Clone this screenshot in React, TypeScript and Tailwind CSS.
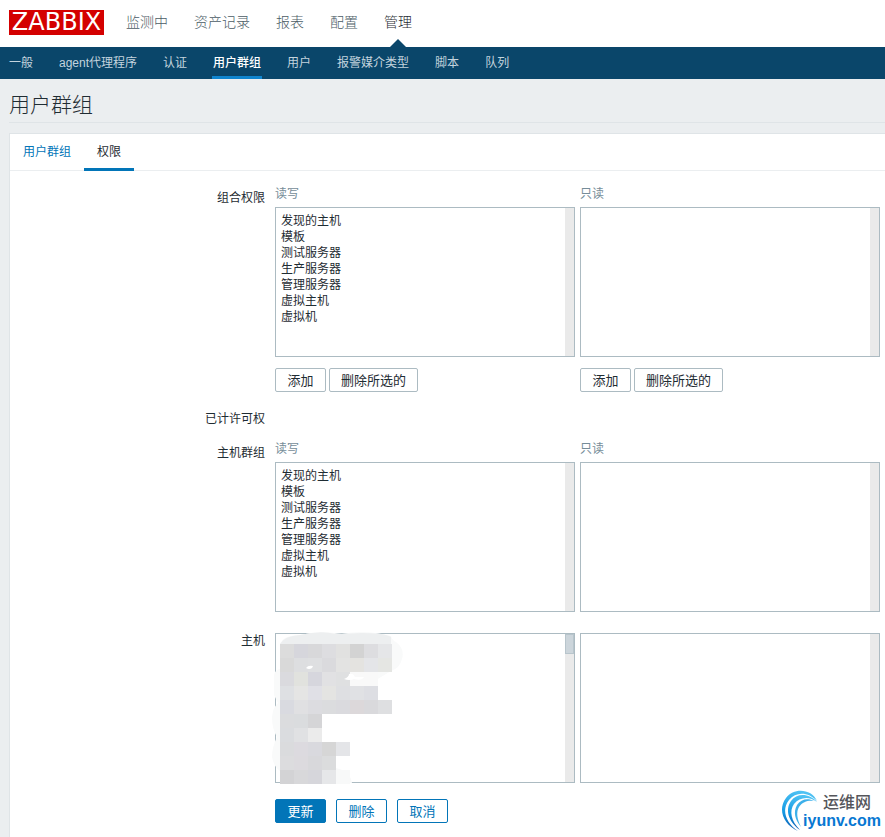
import { useState } from "react";
import clsx from "clsx";

const MAIN_MENU = ["监测中", "资产记录", "报表", "配置", "管理"];
const SUB_MENU = ["一般", "agent代理程序", "认证", "用户群组", "用户", "报警媒介类型", "脚本", "队列"];
const HOST_GROUPS = ["发现的主机", "模板", "测试服务器", "生产服务器", "管理服务器", "虚拟主机", "虚拟机"];

// Masked host names, 14px cells, one array per row
const MASK_ROWS = [
  ["#dcdcdc", "#d6d6dc", "#d8d8da", "#dddde0", "#e1e1e0", "#d3d3d3", "#dddde0", "#e5e6e8"],
  ["#d9d9d9", "#dddee0", "#dedfe1", "#dadadd", "#e3e3e2", "#e4e3e0", "#e4e5e8", "#e5e6e3"],
  ["#dadade", "#e1e2de", "#d6d6dd", "#e1e1e3", "#dfe0e1", "#f9f9f9", "#f9f9f9"],
  ["#dee0e3", "#e5e5e4", "#e0e0e6", "#e4e4e2", "#dedfe2", "#e0e1e4", "#dddee3"],
  ["#d9dae0", "#e0e0e2", "#dcdce0", "#dbdcde", "#dadade", "#dcd8da", "#d9d9dc", "#dedfe1"],
  ["#dbdcde", "#dadcde", "#d5d5d7"],
  ["#dadcdf", "#e0e1e3", "#ebebeb"],
  ["#dadbdd", "#dcdadf", "#d9d9de", "#d6d6d6", "#e4e5e8"],
  ["#dcdcde", "#dcdade", "#d8d8db", "#dbdcdd"],
  ["#d3d3d5", "#d8d8da", "#d6d6db", "#e6e7e9", "#f8f9f9"],
];

interface ListBoxProps {
  label: string;
  options?: string[];
  thumb?: boolean;
}

function ListBox({ label, options = [], thumb }: ListBoxProps) {
  return (
    <div className="flex h-[150px] w-[300px] border border-[#acbbc2] bg-white">
      <select
        multiple
        aria-label={label}
        className="min-w-0 flex-1 appearance-none overflow-hidden px-[5px] py-[3px] text-xs text-[#1f2c33] outline-none"
      >
        {options.map((o) => (
          <option key={o} className="h-4 p-0 leading-4">
            {o}
          </option>
        ))}
      </select>
      <div className="w-[9px] bg-[#eaeaea]">
        {thumb && <div className="h-5 border border-[#b8c5cc] bg-[#ccd5db]" />}
      </div>
    </div>
  );
}

function FormRow({ label, heading, children }: { label: string; heading?: boolean; children?: React.ReactNode }) {
  return (
    <div className="flex gap-[10px]">
      <div className={clsx("w-[255px] shrink-0 text-right text-xs leading-4", heading && "pt-1")}>{label}</div>
      <div className="flex gap-[5px]">{children}</div>
    </div>
  );
}

function PermissionColumn({ title, label, options, actions }: { title: string; label: string; options?: string[]; actions?: boolean }) {
  return (
    <div>
      <div className="mb-[5px] text-xs leading-4 text-[#768d99]">{title}</div>
      <ListBox label={`${label} ${title}`} options={options} />
      {actions && (
        <div className="mt-[11px] flex gap-[3px]">
          <Button>添加</Button>
          <Button>删除所选的</Button>
        </div>
      )}
    </div>
  );
}

function Button({ children, variant = "grey" }: { children: React.ReactNode; variant?: "grey" | "primary" | "alt" }) {
  return (
    <button
      type="button"
      className={clsx(
        "h-6 min-w-[51px] rounded-[2px] border px-[11px] pt-px text-[13px] leading-5",
        variant === "grey" && "border-[#acbbc2] bg-white text-[#1f2c33]",
        variant === "primary" && "border-[#0275b8] bg-[#0275b8] text-white",
        variant === "alt" && "border-[#0275b8] bg-white text-[#0275b8]",
      )}
    >
      {children}
    </button>
  );
}

function MaskedHosts() {
  return (
    <svg className="pointer-events-none absolute -left-[3px] -top-[2px]" width="131" height="154" viewBox="0 0 131 154">
      <path d="M8 14Q10 4 28 4Q48 -1 70 3Q92 -2 119 5Q120 9 124 11Q133 18 130 28Q128 37 119 40L104 49H30V150H8V140Q2 136 0 126Q0 116 5 106Q0 98 0 86Q1 76 6 72L2 64V44Q3 39 8 38Z" fill="#f9fafa" />
      <path d="M8 13Q12 5 28 4Q48 -1 64 3L90 2Q112 2 119 6V13Z" fill="#edeff0" />
      <path d="M64 137Q78 140 80 152H64Z" fill="#f8f9f9" />
      {MASK_ROWS.map((row, y) =>
        row.map((fill, x) => <rect key={`${x}-${y}`} x={8 + x * 14} y={13 + y * 14} width="14" height="14" fill={fill} />),
      )}
      <path d="M34 37Q36 34 41 35L40 37Q37 39 34 37Z" fill="#fff" />
      <path d="M72 48Q77 46 77 43Q81 42 83 46L92 46Q90 50 82 48Q77 50 72 48Z" fill="#fff" />
    </svg>
  );
}

function Watermark() {
  return (
    <div className="pointer-events-none absolute bottom-[5px] right-1 flex">
      <svg width="38" height="43" viewBox="0 0 38 43" aria-hidden="true">
        <defs>
          <linearGradient id="swirl" x1="0.6" y1="0" x2="0.4" y2="1">
            <stop offset="0" stopColor="#52c4f4" />
            <stop offset="0.6" stopColor="#159be4" />
            <stop offset="1" stopColor="#0b5fb5" />
          </linearGradient>
        </defs>
        <path d="M36 12C31 0 13 -2 5 9C-4 21 3 36 17 42C5 34 0 21 8 11C15 2 28 3 36 12Z" fill="url(#swirl)" />
        <path d="M36 13C28 4 16 4 10 12C3 22 9 34 19 41C10 32 8 22 13 15C19 8 28 7 36 13Z" fill="url(#swirl)" />
        <path d="M33 12C27 9 20 10 16 16C12 23 14 31 20 38C16 30 15 23 18 18C22 12 28 11 33 12Z" fill="#3db0ea" />
      </svg>
      <div className="-ml-4 flex flex-col items-end pt-[5px]">
        <span className="mr-[10px] text-base font-medium leading-[18px] text-[#55565b]">运维网</span>
        <span className="text-base font-bold leading-[18px] text-[#0878d2]">iyunv.com</span>
      </div>
    </div>
  );
}

export default function App() {
  const [tab, setTab] = useState("权限");

  return (
    <div className="relative flex min-h-screen flex-col overflow-hidden bg-[#ebeef0] font-['Liberation_Sans','Noto_Sans_CJK_SC',sans-serif] text-[#1f2c33]">
      <header className="flex h-[47px] items-center bg-white pb-[2px] pl-[9px]">
        <a href="#" className="flex h-[25px] w-[95px] items-center justify-center bg-[#d40000] pb-px font-['DejaVu_Sans'] text-2xl leading-6 text-white">
          ZABBIX
        </a>
        <nav className="ml-[22px] flex gap-[26px] pb-px text-sm font-light">
          {MAIN_MENU.map((item) => (
            <a key={item} href="#" className={clsx("relative", item === "管理" ? "text-[#1f2c33]" : "text-[#4b5c66]")}>
              {item}
              {item === "管理" && (
                <span className="absolute left-1/2 top-[27px] -translate-x-1/2 border-x-8 border-b-8 border-x-transparent border-b-[#0a466a]" />
              )}
            </a>
          ))}
        </nav>
      </header>

      <nav className="flex h-8 gap-6 bg-[#0a466a] pl-2 text-xs">
        {SUB_MENU.map((item) => (
          <a
            key={item}
            href="#"
            className={clsx(
              "border-b-[3px] px-px leading-8",
              item === "用户群组" ? "border-[#0f85cf] font-medium text-white" : "border-transparent text-[#c3d4de]",
            )}
          >
            {item}
          </a>
        ))}
      </nav>

      <h1 className="ml-[9px] border-b border-[#dfe4e7] pb-[3px] pt-3 text-[21px] font-light leading-7">用户群组</h1>

      <main className="ml-[9px] mt-[10px] flex-1 border-l border-t border-[#dfe4e7] bg-white pb-3">
        <div role="tablist" className="flex h-[37px] border-b border-[#ebeef0] text-xs">
          {["用户群组", "权限"].map((name) => (
            <button
              key={name}
              type="button"
              role="tab"
              aria-selected={tab === name}
              onClick={() => setTab(name)}
              className={clsx(
                "-mb-px border-b-[3px] px-[13px] pt-[2px]",
                tab === name ? "border-[#0275b8] text-[#1f2c33]" : "border-transparent text-[#0275b8]",
              )}
            >
              {name}
            </button>
          ))}
        </div>

        <form className="pt-[15px]">
          <FormRow label="组合权限" heading>
            <PermissionColumn title="读写" label="组合权限" options={HOST_GROUPS} actions />
            <PermissionColumn title="只读" label="组合权限" actions />
          </FormRow>

          <div className="mb-[14px] mt-[19px]">
            <FormRow label="已计许可权" />
          </div>

          <FormRow label="主机群组" heading>
            <PermissionColumn title="读写" label="主机群组" options={HOST_GROUPS} />
            <PermissionColumn title="只读" label="主机群组" />
          </FormRow>

          <div className="mt-[21px]">
            <FormRow label="主机">
              <div className="relative">
                <ListBox label="主机 读写" thumb />
                <MaskedHosts />
              </div>
              <ListBox label="主机 只读" />
            </FormRow>
          </div>

          <div className="ml-[265px] mt-4 flex gap-[10px]">
            <Button variant="primary">更新</Button>
            <Button variant="alt">删除</Button>
            <Button variant="alt">取消</Button>
          </div>
        </form>
      </main>
      <Watermark />
    </div>
  );
}
